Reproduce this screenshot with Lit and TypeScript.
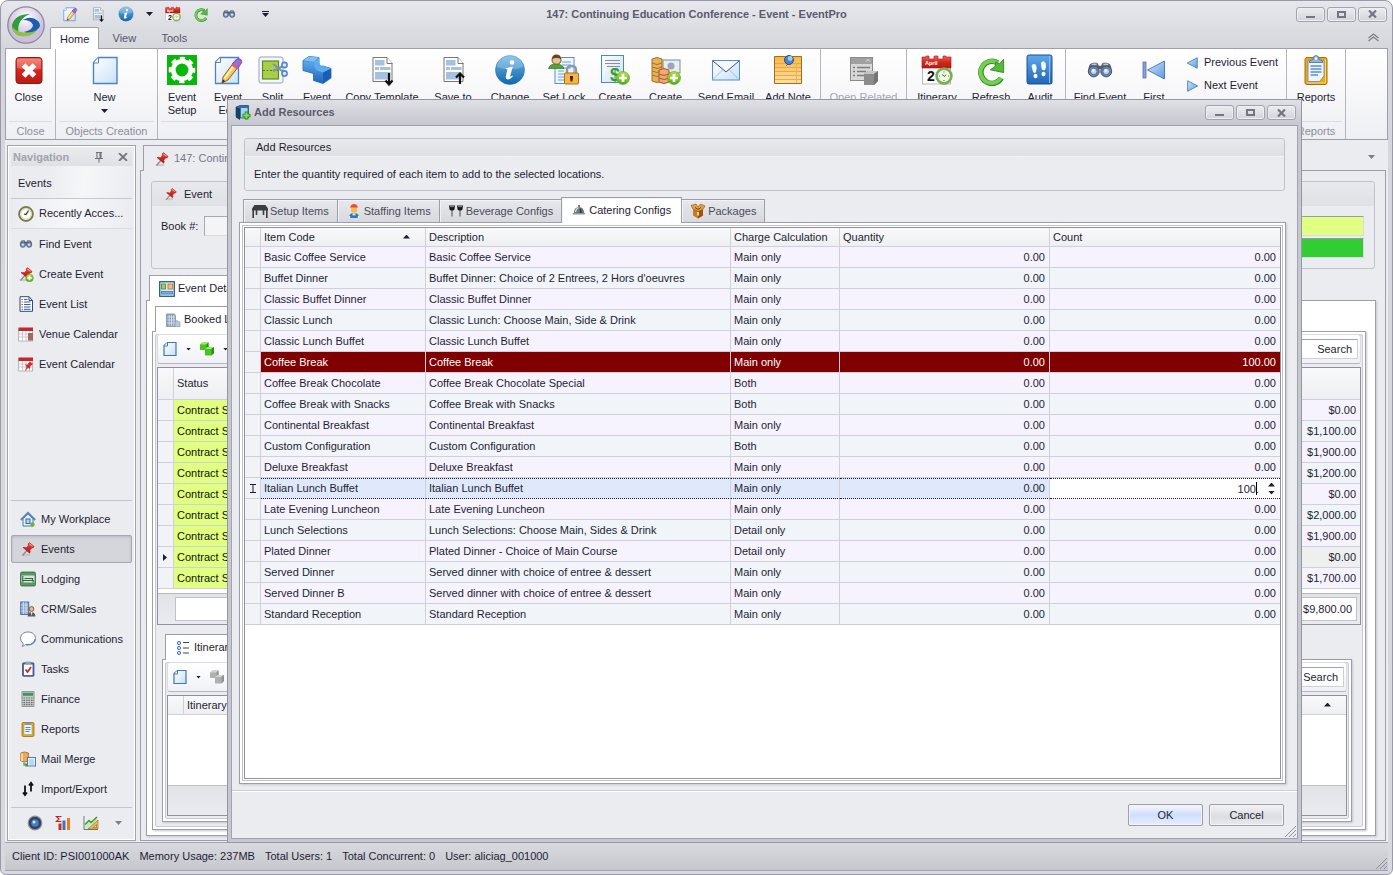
import { LitElement, html, svg, css, nothing, TemplateResult, SVGTemplateResult } from "lit";
import { customElement, state } from "lit/decorators.js";
import { classMap } from "lit/directives/class-map.js";
import { styleMap } from "lit/directives/style-map.js";

const plusBadge = (x: number, y: number, r: number) => svg`
  <circle cx=${x} cy=${y} r=${r} fill="url(#g-lime)" stroke="#5a9a1c" stroke-width="0.6" />
  <path d=${`M${x - r * 0.6} ${y}H${x + r * 0.6}M${x} ${y - r * 0.6}V${y + r * 0.6}`} stroke="#fff" stroke-width=${r * 0.42} />`;

const pencil = svg`
  <path d="M11 23 L22 8 L27 12 L16 26 L10 29 Z" fill="#f3c65a" stroke="#8a6420" stroke-width="1" />
  <path d="M12.500 24.500 L23.500 9.500" stroke="#fdf0bd" stroke-width="2" />
  <path d="M20.500 10 L23 6.500 Q26 3 29 5.500 Q31 8 28.500 10.500 L26 14 Z" fill="#9a6fd0" stroke="#6b3f96" stroke-width="0.8" />
  <path d="M19.500 11.500 L25 15.500 L26.500 13.500 L21 9.500 Z" fill="#e5568c" />
  <path d="M10 29 L11 25.500 L13.300 27.300 Z" fill="#333" />`;

const pinShape = svg`
  <ellipse cx="6" cy="14" rx="4.500" ry="1.200" fill="#bcbcc4" opacity=".7" />
  <path d="M2.500 14.500 L6.800 9.500" stroke="#8c8c94" stroke-width="1.300" />
  <path d="M3 6.500 Q5 6 6.200 7 L8.300 4.700 Q7.600 2.600 9.400 1.600 L14 5.400 Q13.500 7.300 11.500 7 L9.700 9.300 Q10.800 11 9.700 12.200 Z" fill="url(#g-red)" stroke="#a5141a" stroke-width=".6" />
  <path d="M9.500 2.800 L12.500 5.300" stroke="#ff9a90" stroke-width="1.100" />`;

const binoculars = svg`<g transform="translate(2.700 2.500) scale(.83)">
  <path d="M2 15 Q3 7.500 8 7.500 H12 Q14 8 14.500 11 H17.500 Q18 8 20 7.500 H24 Q29 7.500 30 15 V20 H17 V15 H15 V20 H2 Z" fill="#55606e" />
  <path d="M6 9.500 H12 M20 9.500 H26" stroke="#bcc8d6" stroke-width="2" />
  <circle cx="8.500" cy="18" r="6.500" fill="#7186a4" stroke="#46536a" stroke-width="1.200" />
  <circle cx="23.500" cy="18" r="6.500" fill="#7186a4" stroke="#46536a" stroke-width="1.200" />
  <circle cx="8.500" cy="18" r="4" fill="#b7d2f2" stroke="#3e62a0" />
  <circle cx="23.500" cy="18" r="4" fill="#b7d2f2" stroke="#3e62a0" />
  <circle cx="8" cy="17" r="1.500" fill="#fff" /><circle cx="23" cy="17" r="1.500" fill="#fff" /></g>`;

const clipboard = svg`
  <rect x="5" y="3.500" width="22" height="27" rx="2" fill="#eaa90e" stroke="#a56c08" />
  <path d="M24.500 6 H25.500 V29 H7" stroke="#ffd867" fill="none" />
  <path d="M8 6.500 H24 V22 L19.500 27.500 H8 Z" fill="#eef5fd" stroke="#7d94b8" />
  <path d="M10.500 12 H21.500 M10.500 15 H21.500 M10.500 18 H21.500 M10.500 21 H18" stroke="#5d8fd4" stroke-width="1.300" />
  <path d="M9 8.500 Q9 6 13 5.500 Q13 1.500 16 1.500 T19 5.500 Q23 6 23 8.500 Z" fill="#8fb4e4" stroke="#4f6a94" stroke-width=".8" />
  <circle cx="16" cy="4.500" r="1.200" fill="#fff" />`;

const template = svg`
  <path d="M7 3.500 H21 L26 9 V27.500 H7 Z" fill="#fff" stroke="#777" />
  <path d="M21 3.500 V9.500 H26.500" fill="#fff" stroke="#777" />
  <path d="M9 6 H18.500 V11.500 H9 Z M9 13 H13 V16 H9 Z M14 13 H24.500 V16 H14 Z M9 18 H24.500 V25.500 H9 Z" fill="#a5c0e0" />`;

const calendarPage = svg`
  <rect x="1.500" y="10" width="28" height="20" fill="#fdfdfd" stroke="#b8b8c0" />
  <path d="M1 3 H5 V2 H8 V5 H13 V2 H17 V5 H22 V2 H25 V3 H30 V14 H1 Z" fill="url(#g-red)" stroke="#9a1218" stroke-width=".6" />`;

const blankDoc = svg`
  <path d="M4.500 8.500 L9.500 3.500 H28 V29.500 H4.500 Z" fill="url(#g-page)" stroke="#4c83c3" stroke-width="1.400" />
  <path d="M4.500 9 H9.500 V3.500" fill="#fff" stroke="#4c83c3" stroke-width="1" />`;

const cubePair = (top: string, left: string, right: string) => svg`
  <path d="M1 3.500 L3.500 1.500 H9.500 V7 L7.500 9 H1 Z" fill=${left} /><path d="M1 3.500 L3.500 1.500 H9.500 L7.500 3.500 Z" fill=${top} /><path d="M7.500 3.500 L9.500 1.500 V7 L7.500 9 Z" fill=${right} />
  <path d="M6 8 L8.500 6 H15 V12 L12.500 14.500 H6 Z" fill=${left} /><path d="M6 8 L8.500 6 H15 L12.500 8 Z" fill=${top} /><path d="M12.500 8 L15 6 V12 L12.500 14.500 Z" fill=${right} />`;

const ICONS: Record<string, { box: number; art: SVGTemplateResult }> = {
  close: { box: 32, art: svg`
    <rect x="3" y="3.500" width="26" height="26" rx="3" fill="url(#g-red)" stroke="#8e1712" />
    <path d="M4 5 H28 V15 Q16 17 4 14 Z" fill="#fff" opacity=".22" />
    <path d="M10.500 11 L21.500 22 M21.500 11 L10.500 22" stroke="#fff" stroke-width="5.200" />` },
  blank: { box: 32, art: blankDoc },
  gear: { box: 32, art: svg`
    <rect x="1" y="1" width="30" height="30" fill="#08b808" />
    <circle cx="16" cy="16" r="8.700" fill="none" stroke="#fff" stroke-width="4.600" />
    <circle cx="16" cy="16" r="11.600" fill="none" stroke="#fff" stroke-width="3.400" stroke-dasharray="5.100 4.010" stroke-dashoffset="2.500" />` },
  edit: { box: 32, art: svg`
    <path d="M3.500 8 L8 3.500 H26.500 V29.500 H3.500 Z" fill="url(#g-page)" stroke="#4c83c3" stroke-width="1.300" />
    <path d="M3.500 8.500 H8.500 V3.500" fill="#fff" stroke="#4c83c3" />${pencil}` },
  split: { box: 32, art: svg`
    <rect x="2" y="3" width="24" height="26" rx="2" fill="#f5f8fc" stroke="#8fa2c4" />
    <rect x="5.500" y="7" width="16" height="18" fill="#a7cf4a" stroke="#5f8c1e" stroke-width="1.200" />
    <path d="M6 16.500 H21" stroke="#5b7c22" stroke-dasharray="2 1.500" />
    <path d="M16 10 L27 18.500 M16 17 L27 11.500" stroke="#7e90ab" stroke-width="2" />
    <circle cx="27.500" cy="11" r="2.600" fill="#dce9fa" stroke="#4d86cf" stroke-width="1.600" />
    <circle cx="27.500" cy="19.500" r="2.600" fill="#dce9fa" stroke="#4d86cf" stroke-width="1.600" />` },
  puzzle: { box: 32, art: svg`
    <path d="M2 6.500 L8 2.500 L18 3.500 V9 Q18 13 22 12 L30 14.500 V24 L22 29.500 L12.500 26.500 V19.500 L2 16.500 Z" fill="#2a7fd0" stroke="#1d5fae" stroke-width=".8" />
    <path d="M2 6.500 L8 2.500 L18 3.500 L12.500 8 Z" fill="#7fc0f4" />
    <path d="M2.400 7 L12.500 8.500 Q12 14 16.500 16.500 L21.500 18.500 V29 L13 26.200 V19 L2.400 16.200 Z" fill="url(#g-cube)" />
    <path d="M12.500 8 L18 4 V9 Q18 13 22 12 L30 14.500 L22 18.500 Q12 17 12.500 8 Z" fill="#5aaeee" />
    <path d="M22 18.700 L29.700 14.800 V23.800 L22 29 Z" fill="#1b5fb4" />` },
  copyTemplate: { box: 32, art: svg`${template}<path d="M23 19 V30 M19.500 26.500 L23 30.500 L26.500 26.500" fill="none" stroke="#111" stroke-width="2.200" />` },
  saveTemplate: { box: 32, art: svg`${template}<path d="M23 30 V20 M19 23.500 L23 19.500 L27 23.500" fill="none" stroke="#111" stroke-width="2.200" />` },
  info: { box: 32, art: svg`
    <circle cx="16" cy="16" r="14.500" fill="url(#g-info)" stroke="#2a78b8" stroke-width=".6" />
    <path d="M3 13 A13 12 0 0 1 29 13 Q16 18 3 13 Z" fill="#fff" opacity=".22" />
    <circle cx="18" cy="8.500" r="2.300" fill="#fff" />
    <path d="M12 14 Q16 13.500 18.800 12.500 L16.200 22 Q15.900 23.500 18.500 21.500 L18.800 22.500 Q15 26.500 12.600 25 Q11.400 24 12 21.500 L13.500 15.300 L12 15 Z" fill="#fff" />` },
  lock: { box: 32, art: svg`
    <rect x="7" y="3.500" width="19" height="26" fill="#eff6fe" stroke="#5b8ccb" />
    <path d="M14 8 H23 M14 11 H23 M14 14 H23 M10 17 H16 M10 20 H16 M10 23 H16 M10 26 H16" stroke="#6f9ed6" stroke-width="1.200" />
    <circle cx="8.500" cy="6" r="4.500" fill="#e8c39a" stroke="#744f22" /><path d="M4 5 Q4 .5 8.500 .5 T13 5 Q9 3 4 5 Z" fill="#6b451c" />
    <path d="M.5 14.500 Q2 9.500 8.500 10 T16 14.500 Z" fill="#4fa635" stroke="#2e7420" stroke-width=".7" />
    <path d="M19 19 V16 Q19 12 23.500 12 T28 16 V19" fill="none" stroke="#8d99ab" stroke-width="2.400" />
    <rect x="16.500" y="19" width="14" height="11" rx="1" fill="#f6b646" stroke="#b06c14" />
    <path d="M22 22 H25 V24 L24.300 27.500 H22.700 L22 24 Z" fill="#3c2508" />` },
  money: { box: 32, art: svg`
    <rect x="2.500" y="1.500" width="22" height="27" fill="url(#g-page)" stroke="#4e87c8" />
    <path d="M6 6.500 H21 M6 9.500 H21 M8 12.500 H21" stroke="#8b9098" stroke-width="1.100" />
    <text x="11" y="27" font-size="18" font-weight="700" fill="#3b9a33" font-family="Liberation Sans">$</text>
    ${plusBadge(24, 24, 6.500)}` },
  coins: { box: 32, art: svg`
    <rect x="13" y="6" width="17" height="13" fill="#e7edf3" stroke="#7d8a98" /><circle cx="21" cy="12" r="3.500" fill="#9aa7b4" />
    <path d="M2 5 Q7 2 12 5 V27 Q7 30 2 27 Z" fill="#e8b25c" stroke="#a86f22" />
    <path d="M2 9 Q7 12 12 9 M2 13 Q7 16 12 13 M2 17 Q7 20 12 17 M2 21 Q7 24 12 21" fill="none" stroke="#a86f22" />
    <path d="M9 16 Q14 13 19 16 V28 Q14 31 9 28 Z" fill="#f0a878" stroke="#a8562a" />
    <path d="M9 20 Q14 23 19 20 M9 24 Q14 27 19 24" fill="none" stroke="#a8562a" />${plusBadge(24, 24, 6.500)}` },
  mail: { box: 32, art: svg`
    <rect x="2.500" y="6.500" width="27" height="19.500" fill="url(#g-page)" stroke="#5b8ccb" />
    <path d="M3 25.500 L12.500 16 M29 25.500 L19.500 16" stroke="#9dbfe6" /><path d="M3 7 L16 18 L29 7" fill="#f4f9fe" stroke="#35507c" />` },
  note: { box: 32, art: svg`
    <path d="M2.500 2.500 H29.500 V29.500 H2.500 Z" fill="url(#g-note)" stroke="#a8691a" />
    <path d="M3 9.500 H29 M3 13.500 H29 M3 17.500 H29 M3 21.500 H29 M3 25.500 H29" stroke="#e0a040" stroke-width=".8" /><path d="M24.500 9 V29" stroke="#e8b25c" />
    <path d="M17 9 L14 12" stroke="#777" />
    <circle cx="17" cy="6" r="4.500" fill="#4a84c8" stroke="#234f8a" /><circle cx="18.200" cy="4.500" r="2.400" fill="#a6cbf2" />` },
  related: { box: 32, art: svg`
    <rect x="2.500" y="3.500" width="22" height="23" fill="#d8d8d8" stroke="#8a8a8a" /><rect x="3" y="4" width="21" height="6" fill="#a0a0a0" />
    <path d="M18 7.500 L20 5.500 L22 7.500" stroke="#eee" fill="none" />
    <path d="M5 13.500 H7 M9 13.500 H22 M5 17.500 H7 M9 17.500 H18 M5 21.500 H7 M9 21.500 H16" stroke="#7c7c7c" stroke-width="1.400" />
    <path d="M16 20 L20 17 H30 V27 L26 31 H16 Z" fill="#8c8c8c" /><path d="M16 20 L20 17 H30 L26 20 Z" fill="#c4c4c4" /><path d="M26 20 L30 17 V27 L26 31 Z" fill="#747474" />` },
  itinerary: { box: 32, art: svg`${calendarPage}
    <text x="4" y="11" font-size="5.500" font-weight="700" fill="#fff" font-family="Liberation Sans">April</text>
    <text x="6" y="27" font-size="14" font-weight="700" fill="#111" font-family="Liberation Sans">2</text>
    <circle cx="23" cy="22" r="7.400" fill="#f1fbe8" stroke="#78b053" stroke-width="2.600" /><path d="M23 17.500 V18.500 M23 26 V27 M18 22 H19 M27 22 H28 M21 20.500 L23.500 22.500 L25 20.500" stroke="#4a6a38" fill="none" />` },
  refresh: { box: 32, art: svg`<g transform="translate(1.500 2) scale(.92)">
    <path d="M27 24 A12 12 0 1 1 23 7.500" fill="none" stroke="#2f8a22" stroke-width="6" />
    <path d="M26.500 24 A12 12 0 1 1 23 7.500" fill="none" stroke="#74cf50" stroke-width="4.200" />
    <path d="M29.500 3.500 V18 L15 15 L20 11.500 L21 6.500 L25 8.500 Z" fill="#58b83a" stroke="#2f8a22" /></g>` },
  audit: { box: 32, art: svg`
    <rect x="3" y="1" width="25" height="29" rx="2" fill="url(#g-cube)" stroke="#1d4f94" /><path d="M25.500 2 V29" stroke="#8ebbea" />
    <g fill="#fff"><path d="M7.500 12 Q9 8.500 12 11 Q13.500 14 12 18 Q10 20 9 17.500 Z" /><ellipse cx="11.500" cy="22" rx="2" ry="2.300" />
    <path d="M17 9 Q19 5.500 21.500 9 Q22.500 13 21 16 Q18 17 17.500 14 Z" /><ellipse cx="19.500" cy="20" rx="2" ry="2.300" /></g>` },
  binoculars: { box: 32, art: binoculars },
  first: { box: 32, art: svg`<rect x="5" y="8" width="3" height="16" fill="#8c9fd4" stroke="#5470b4" stroke-width=".8" /><path d="M26.500 7 V25 L9.500 16 Z" fill="url(#g-tri)" stroke="#4a7fbe" />` },
  previous: { box: 16, art: svg`<path d="M14 2 V14 L2.500 8 Z" fill="url(#g-tri)" stroke="#4a7fbe" />` },
  next: { box: 16, art: svg`<path d="M3 2 V14 L14.500 8 Z" fill="url(#g-tri)" stroke="#4a7fbe" />` },
  clipboard: { box: 32, art: clipboard },
  pin: { box: 16, art: pinShape },
  pinAdd: { box: 16, art: svg`${pinShape}${plusBadge(11.500, 12, 3.800)}` },
  clock: { box: 16, art: svg`
    <circle cx="8" cy="8" r="6.900" fill="#fbfcf2" stroke="#7b7d52" stroke-width="2" /><circle cx="8" cy="8" r="5.300" fill="none" stroke="#d5d8b0" />
    <path d="M10.500 4.500 L8 8.500 L6 8" fill="none" stroke="#333" stroke-width="1.200" />` },
  list: { box: 16, art: svg`
    <path d="M2 .7 H11 L14.500 4.500 V15.300 H2 Z" fill="#fff" stroke="#274d78" /><path d="M11 .7 V4.500 H14.500" fill="none" stroke="#274d78" />
    <path d="M3.500 3.500 H4.800 M3.500 6 H4.800 M3.500 8.500 H4.800 M3.500 11 H4.800 M3.500 13.300 H4.800" stroke="#c03030" /><path d="M6 3.500 H9.500 M6 6 H12.500 M6 8.500 H12.500 M6 11 H12.500 M6 13.300 H12.500" stroke="#2d62a8" />` },
  venueCalendar: { box: 16, art: svg`
    <rect x=".7" y="3" width="14" height="12" fill="#fff" stroke="#9a9aa2" stroke-width=".7" /><path d="M.5 1.500 H15 V5 H.5 Z" fill="#c9252b" />
    <path d="M1 8 H14 M1 11 H14 M4.500 5 V15 M8 5 V15 M11.500 5 V15" stroke="#b9b9c0" stroke-width=".7" /><path d="M10 7 H15 V14.500 H10 Z" fill="#a9675c" />` },
  eventCalendar: { box: 16, art: svg`
    <rect x=".7" y="3" width="14" height="12" fill="#fff" stroke="#9a9aa2" stroke-width=".7" /><path d="M.5 1.500 H15 V5 H.5 Z" fill="#c9252b" />
    <path d="M1 8 H14 M1 11 H14 M4.500 5 V15 M8 5 V15 M11.500 5 V15" stroke="#b9b9c0" stroke-width=".7" />
    <path d="M7 8 L9 9 L12 5.500 L15 8 L12 10.500 L12 13 L10 12 L7 15 L8.500 11 Z" fill="#dc2a2c" />` },
  home: { box: 16, art: svg`
    <path d="M3 8 V15 H13 V8 L8 3 Z" fill="#e8f1fb" stroke="#4a76ae" /><path d="M.8 9 L8 2 L15.200 9" fill="none" stroke="#5c86ba" stroke-width="2" />
    <rect x="6" y="8" width="4" height="4.500" fill="#b8d4f2" stroke="#3769ab" /><circle cx="12.500" cy="13.500" r="2.200" fill="#6cb33c" />` },
  lodging: { box: 16, art: svg`
    <rect x=".5" y="1" width="15" height="14" rx="1.500" fill="#5d9468" stroke="#2f6a3c" stroke-width=".8" /><rect x="1.500" y="4.500" width="13" height="7" fill="#d4e7d6" />
    <path d="M2.800 5 V11.500 M2.800 9.500 H13.200 V11.500 M4.500 7.500 H12.500 V9.500" stroke="#2f6a3c" fill="none" stroke-width="1.100" />` },
  crm: { box: 16, art: svg`
    <rect x=".7" y="1" width="8" height="12.500" fill="#8fabd4" stroke="#4f6fa6" /><path d="M1 4 H8 M1 7 H8 M1 10 H8 M3.500 1 V13 M6 1 V13" stroke="#dbe6f6" stroke-width=".7" />
    <circle cx="11.500" cy="8" r="2.400" fill="#eab986" stroke="#6b3f1c" stroke-width=".8" /><path d="M7.500 15.500 Q8 11 11.500 11 T15.500 15.500 Z" fill="#5a5a60" /><path d="M11 11 L11.500 15 L12.500 11 Z" fill="#fff" />` },
  bubble: { box: 16, art: svg`<path d="M8 1 C12.500 1 15.500 3.700 15.500 7.500 S12.500 14 8 14 Q6.500 14 5.500 13.500 Q4.500 15 2 15.300 Q3.500 14 3 12.200 Q.5 10.500 .5 7.500 C.5 3.700 3.500 1 8 1 Z" fill="#fff" stroke="#7a8594" /><path d="M6 13.700 Q14 14 15.200 8" fill="none" stroke="#3f83c2" stroke-width="1.200" />` },
  tasks: { box: 16, art: svg`
    <rect x="2.500" y="1.800" width="11.500" height="13.500" rx="1" fill="#4a6fae" stroke="#2c4878" stroke-width=".7" /><rect x="4" y="3.500" width="8.500" height="10.500" fill="#fff" />
    <rect x="5.500" y=".6" width="5.500" height="2.800" fill="#9aa0aa" /><path d="M5.500 8.500 L7.500 11 L11 6" fill="none" stroke="#cc2222" stroke-width="1.700" />` },
  finance: { box: 16, art: svg`
    <rect x="2" y=".7" width="12" height="14.600" fill="#c8ccc8" stroke="#6f7470" stroke-width=".7" /><rect x="3" y="1.800" width="10" height="3" fill="#3f9460" />
    <path d="M3.500 7 H12.500 M3.500 9.300 H12.500 M3.500 11.600 H12.500 M3.500 13.700 H12.500" stroke="#6a6d6a" stroke-dasharray="1.500 1" stroke-width="1.200" />` },
  reportsSmall: { box: 16, art: svg`
    <rect x="2" y="1.500" width="12" height="14" rx="1.200" fill="#eaa90e" stroke="#a56c08" stroke-width=".8" />
    <rect x="4" y="3.500" width="8" height="10" fill="#f3f8fe" stroke="#8296b8" stroke-width=".6" /><path d="M5.500 6.500 H10.500 M5.500 8.500 H10.500 M5.500 10.500 H9.500" stroke="#4f86cc" />
    <path d="M5 4 V2.500 H6.500 Q8 -.3 9.500 2.500 H11 V4 Z" fill="#6f94c8" />` },
  mailMerge: { box: 16, art: svg`
    <path d="M.8 2 Q4.500 0 8.500 2 V10 Q4.500 12 .8 10 Z" fill="#e9a95a" stroke="#a86a20" stroke-width=".8" /><path d="M2 2.500 V10" stroke="#ffe3b4" stroke-width="1.500" />
    <rect x="7.500" y="6.500" width="8" height="8.500" fill="#eef5fd" stroke="#4878b6" /><path d="M9 9 H14 M9 11 H14 M9 13 H14" stroke="#7aa4d8" stroke-width=".8" />
    <path d="M4 11.500 V14 H7 M5.500 12.500 L7.200 14 L5.500 15.500" fill="none" stroke="#3b9a2b" stroke-width="1.200" />` },
  importExport: { box: 16, art: svg`<path d="M5 4.500 V14 M3 11.500 L5 14 L7 11.500 M11 10.500 V2 M9 4.500 L11 1.800 L13 4.500" fill="none" stroke="#111" stroke-width="1.800" />` },
  orb: { box: 16, art: svg`<circle cx="8" cy="8" r="6.800" fill="#3a4252" stroke="#8a94a6" stroke-width="1.200" /><circle cx="8" cy="8" r="3.800" fill="#3f7fd2" /><circle cx="7" cy="7" r="1.500" fill="#d5e8fc" />` },
  sigmaChart: { box: 16, art: svg`<path d="M6.500 1.500 H1.500 L4 4 L1.500 6.500 H6.500" fill="none" stroke="#c02222" stroke-width="1.200" /><path d="M3.500 8.500 H6.500 V15 H3.500 Z" fill="#d22c1e" /><path d="M7.500 5.500 H10.500 V15 H7.500 Z" fill="#3c74c0" /><path d="M12 3 H15 V15 H12 Z" fill="#ee7a1c" />` },
  areaChart: { box: 16, art: svg`<path d="M1 1 V14.500 H15" fill="none" stroke="#6a7a8c" /><path d="M2 9 L6 5 L8 7 L14 2 V13.500 H2 Z" fill="#cfe8b8" /><path d="M2 9.500 L6 5.500 L8 7.500 L14 2" fill="none" stroke="#3f9a2c" stroke-width="1.500" /><path d="M5 14 L15 5 V14 Z M10 12.500 H13.500 V9.500 Z" fill="#f0b860" fill-rule="evenodd" stroke="#9a6418" stroke-width=".6" />` },
  layout: { box: 16, art: svg`<rect x=".7" y=".7" width="14.600" height="14.600" fill="#d8e8f8" stroke="#1f4f8c" stroke-width="1.200" /><rect x="2.500" y="3" width="4" height="5" fill="#9ad06c" stroke="#4a8a28" stroke-width=".8" /><rect x="9" y="3" width="4.500" height="5" fill="#f2bf74" stroke="#b57620" stroke-width=".8" /><rect x="2.500" y="10.500" width="11" height="2.500" fill="#7fb0e0" stroke="#3f74b0" stroke-width=".8" />` },
  building: { box: 16, art: svg`<path d="M1.500 2 H9.500 L10.500 4 V14.500 H1.500 Z" fill="#7c9cc8" stroke="#a0a088" /><path d="M2 5 H10 M2 8 H10 M2 11 H10 M4.200 3 V14 M6.500 3 V14 M8.800 3 V14" stroke="#dfeaf8" stroke-width=".8" /><path d="M10 10 L12 8.500 L15 10.500 V14.500 H10 Z" fill="#b8c8e0" stroke="#a0a088" stroke-width=".8" />` },
  smallDoc: { box: 16, art: svg`<path d="M2 4.500 L5.500 1.500 H14 V14.500 H2 Z" fill="url(#g-page)" stroke="#3c78bc" stroke-width="1.200" /><path d="M2 5 H5.500 V1.500" fill="#fff" stroke="#3c78bc" />` },
  greenCubes: { box: 16, art: cubePair("#9be86a", "#4cc324", "#2d8f12") },
  grayCubes: { box: 16, art: cubePair("#d2d2d4", "#b0b0b2", "#929294") },
  bullets: { box: 16, art: svg`<g fill="#d7e8f8" stroke="#3c74b4"><circle cx="4" cy="3" r="1.600" /><circle cx="4" cy="8" r="1.600" /><circle cx="4" cy="13" r="1.600" /></g><path d="M8 2.500 H14 M8 8 H14 M8 13 H14" stroke="#444" stroke-width="1.200" />` },
  tableIcon: { box: 16, art: svg`<path d="M0 5.500 L2.500 2 H13.500 L16 5.500 V7.500 H0 Z" fill="#3c3c40" /><path d="M1.200 7 V15 M4.500 7 V12 M11.500 7 V12 M14.800 7 V15" stroke="#3c3c40" stroke-width="1.600" />` },
  person: { box: 16, art: svg`<path d="M4.500 5 V3.500 Q5 1 8 1 T11.500 3.500 V5 Z" fill="#e8502e" /><path d="M5 4.500 H11 V8 Q10.500 10 8 10 T5 8 Z" fill="#f5b95e" /><path d="M3.500 15 V12 L6 10 H10 L12.500 12 V15 Z" fill="#1e7cc8" /><path d="M6.500 9.500 H9.500 V12.500 H6.500 Z" fill="#f7d08e" /><path d="M3 13 H4.200 V15 H3 Z M11.800 13 H13 V15 H11.800 Z" fill="#e8f2fb" />` },
  glasses: { box: 16, art: svg`<path d="M1 2.500 H7 L6.500 6.500 Q4 9 1.500 6.500 Z M9 2.500 H15 L14.500 6.500 Q12 9 9.500 6.500 Z" fill="#18181c" /><path d="M4 7 V13.500 M12 7 V13.500" stroke="#555" stroke-width="1.100" /><path d="M1.800 3.600 H6 M9.800 3.600 H14" stroke="#8a8a90" />` },
  cloche: { box: 16, art: svg`<circle cx="8" cy="3.500" r="1.200" fill="#555" /><path d="M2 11.500 Q2.500 4.500 8 4.500 T14 11.500 Z" fill="#6f7680" /><path d="M4 10.500 Q4.500 6.500 7.500 5.500" stroke="#e4e8ee" fill="none" stroke-width="1.200" /><path d="M8.500 5.500 Q9.500 8 9 11 H11.500 Q11 7 8.500 5.500 Z" fill="#34383e" /><rect x=".8" y="11.500" width="14.400" height="1.600" rx=".8" fill="#8e959e" />` },
  box: { box: 16, art: svg`<path d="M3 6 L8 8 L13 6 V12.500 L8 15.500 L3 12.500 Z" fill="#c77a24" /><path d="M8 8 L13 6 V12.500 L8 15.500 Z" fill="#9a5614" /><path d="M3 6 L1 2.500 L6 1 L8 4 L10.500 1 L15 3 L13 6.500 L8 8.500 Z" fill="#e2a04a" stroke="#8c4e14" stroke-width=".6" /><path d="M5 4.500 L8 6.500 L11 4.500" fill="none" stroke="#70400f" /><path d="M7 9 H9 V12 L8 13 L7 12 Z" fill="#f4cf90" />` },
  bookAdd: { box: 16, art: svg`<path d="M1 2 L5 .5 H13.500 V13 H5 L1 11.500 Z" fill="#2f6fae" stroke="#174878" stroke-width=".7" /><path d="M1 2 L5 3.500 V15 L1 12.500 Z" fill="#153f68" /><path d="M6 3 H12.500 V12.500 H6 Z" fill="#a8d2f0" /><path d="M11.500 6.500 V14.500 M7.500 10.500 H15.500" stroke="#2e8a1c" stroke-width="3.600" /><path d="M11.500 7.500 V13.500 M8.500 10.500 H14.500" stroke="#7ee05a" stroke-width="1.800" />` },
  pushpin: { box: 12, art: svg`<path d="M3 1.500 H9 M4 1.500 V7 M2 7.500 H10 M6 8 V11.500" stroke="#70707c" stroke-width="1.100" fill="none" /><path d="M6.500 2 H8.500 V7 H6.500 Z" fill="#70707c" />` },
};

const icon = (name: string, size: number) => {
  const { box, art } = ICONS[name];
  return html`<svg class="icon" width=${size} height=${size} viewBox="0 0 ${box} ${box}" aria-hidden="true">${art}</svg>`;
};

interface Tool { label: string; icon: string; width: number; disabled?: boolean; menu?: boolean }

const EVENT_TOOLS: Tool[] = [
  { label: "Event Setup", icon: "gear", width: 46 },
  { label: "Event Edit", icon: "edit", width: 46 },
  { label: "Split Event", icon: "split", width: 43 },
  { label: "Event Merge", icon: "puzzle", width: 46 },
  { label: "Copy Template", icon: "copyTemplate", width: 84 },
  { label: "Save to Template", icon: "saveTemplate", width: 58 },
  { label: "Change Status", icon: "info", width: 56 },
  { label: "Set Lock", icon: "lock", width: 52 },
  { label: "Create Invoice", icon: "money", width: 50 },
  { label: "Create Deposit", icon: "coins", width: 51 },
  { label: "Send Email", icon: "mail", width: 70 },
  { label: "Add Note", icon: "note", width: 54 },
];

const NAV_ITEMS = [
  ["clock", "Recently Acces..."], ["binoculars", "Find Event"], ["pinAdd", "Create Event"],
  ["list", "Event List"], ["venueCalendar", "Venue Calendar"], ["eventCalendar", "Event Calendar"],
];

const NAV_GROUPS = [
  ["home", "My Workplace"], ["pin", "Events"], ["lodging", "Lodging"], ["crm", "CRM/Sales"],
  ["bubble", "Communications"], ["tasks", "Tasks"], ["finance", "Finance"], ["reportsSmall", "Reports"],
  ["mailMerge", "Mail Merge"], ["importExport", "Import/Export"],
];

const AMOUNTS = ["$0.00", "$1,100.00", "$1,900.00", "$1,200.00", "$0.00", "$2,000.00", "$1,900.00", "$0.00", "$1,700.00"];

interface Config { code: string; text: string; charge: string; count: string }
const row = (code: string, text = code, charge = "Main only", count = "0.00"): Config => ({ code, text, charge, count });

const CONFIGS: Config[] = [
  row("Basic Coffee Service"),
  row("Buffet Dinner", "Buffet Dinner: Choice of 2 Entrees, 2 Hors d'oeuvres"),
  row("Classic Buffet Dinner"),
  row("Classic Lunch", "Classic Lunch: Choose Main, Side & Drink"),
  row("Classic Lunch Buffet"),
  row("Coffee Break", "Coffee Break", "Main only", "100.00"),
  row("Coffee Break Chocolate", "Coffee Break Chocolate Special", "Both"),
  row("Coffee Break with Snacks", "Coffee Break with Snacks", "Both"),
  row("Continental Breakfast"),
  row("Custom Configuration", "Custom Configuration", "Both"),
  row("Deluxe Breakfast"),
  row("Italian Lunch Buffet", "Italian Lunch Buffet", "Main only", "100."),
  row("Late Evening Luncheon"),
  row("Lunch Selections", "Lunch Selections: Choose Main, Sides & Drink", "Detail only"),
  row("Plated Dinner", "Plated Dinner - Choice of Main Course", "Detail only"),
  row("Served Dinner", "Served dinner with choice of entree & dessert"),
  row("Served Dinner B", "Served dinner with choice of entree & dessert"),
  row("Standard Reception"),
];

@customElement("app-root")
export class AppRoot extends LitElement {
  @state() private highlighted = 5;
  @state() private editing = 11;

  static styles = css`
    :host { display: block; font: 11px/13px "Liberation Sans", Arial, sans-serif; color: #1e1e32; cursor: default; }
    * { box-sizing: border-box; }
    button, input { font: inherit; color: inherit; margin: 0; padding: 0; border: 0; background: none; outline: none; }
    a { color: inherit; text-decoration: none; }
    .defs { position: absolute; }
    .icon { display: block; flex: none; }
    .gap { width: 4px; flex: none; }
    .arrow { width: 5px; height: 3px; background: currentColor; clip-path: polygon(0 0, 100% 0, 50% 100%); flex: none; }
    .arrow.large { width: 7px; height: 4px; }
    .arrow.up { clip-path: polygon(0 100%, 100% 100%, 50% 0); }
    .arrow.muted { color: #7d7d8c; }

    .window { position: relative; display: flex; flex-direction: column; height: 100vh; min-height: 640px; overflow: hidden;
      border: 1px solid #9a99a8; border-radius: 8px 8px 6px 6px;
      background: linear-gradient(#e6e7ec, #d5d6db 48px, #d8d9de); }
    .title-row { display: grid; grid-template-columns: 1fr auto 1fr; align-items: center; height: 26px; }
    .title { margin: 0; font-size: 11px; font-weight: 700; color: #5a5a6c; }
    .quick { display: flex; align-items: center; gap: 12px; padding-left: 61px; }
    .quick button { display: flex; }
    .quick .lead { margin-right: 2px; }
    .app-orb { position: absolute; left: 6px; top: 5px; width: 38px; height: 38px; }
    .frame-buttons { display: flex; justify-content: flex-end; gap: 2px; padding-right: 5px; }
    .frame-buttons button { display: flex; align-items: center; justify-content: center; width: 29px; height: 15px; color: #747484;
      border: 1px solid #a3a3b0; border-radius: 3px; background: linear-gradient(#ececf0, #d3d4da); box-shadow: inset 0 0 0 1px #eeeef2; }
    .tab-row { display: flex; align-items: flex-end; height: 21px; padding-left: 49px; }
    .ribbon-tab { height: 20px; padding: 0 9px; min-width: 50px; color: #55556a; text-align: center; }
    .ribbon-tab.active { height: 22px; min-width: 49px; padding-top: 1px; color: #1e1e32; border: 1px solid #9e9eac; border-bottom: 0; border-radius: 2px 2px 0 0; background: #fff; z-index: 1; margin-bottom: -1px; }
    .collapse { margin: 0 12px 6px auto; display: flex; }

    .ribbon { display: flex; height: 92px; margin: 0 4px; border: 1px solid #9e9eac; background: linear-gradient(#fff, #f8f8fa 40px, #eeeff3); flex: none; }
    .group { display: flex; flex-direction: column; border-right: 1px solid #b4b5c0; padding: 5px 1px 0; }
    .group .tools { display: flex; flex: 1; }
    .group .caption { height: 18px; padding-top: 3px; text-align: center; color: #8d8d9c; border-top: 1px solid #dcdde3; margin: 0 2px; white-space: nowrap; }
    .tool { display: flex; flex-direction: column; align-items: center; gap: 5px; flex: none; }
    .tool:disabled { color: #a4a4b2; }
    .small-tools { display: flex; flex-direction: column; padding: 0 7px 0 10px; }
    .small-tools button { display: flex; align-items: center; gap: 5px; height: 23px; margin-top: -3px; margin-bottom: 3px; white-space: nowrap; }

    .body { position: relative; z-index: 0; display: flex; gap: 4px; flex: 1; min-height: 0; margin: 0 4px; padding: 5px 2px 1px; background: #ebecf0; }
    .nav { display: flex; flex-direction: column; flex: none; width: 129px; border: 1px solid #a2a2ae; box-shadow: inset 0 0 0 1px #fff; padding: 2px 3px; }
    .nav-head { display: flex; align-items: center; height: 18px; padding: 0 4px 0 2px; font-weight: 700; color: #a2a2ae; background: linear-gradient(#eaebee, #dfe0e4); flex: none; }
    .nav-head .icon { margin-left: auto; }
    .nav-head button { margin-left: 13px; color: #747482; display: flex; }
    .nav-title { height: 33px; margin: 0; padding: 11px 7px; font-size: 11px; font-weight: 400; background: linear-gradient(100deg, #ebecf0 30%, #f5f6f8 60%, #ebecf0); border-bottom: 1px solid #c6c7d0; flex: none; }
    .nav-list { list-style: none; margin: 0; padding: 0; }
    .nav-list.top { flex: 1; min-height: 0; }
    .nav-list li { display: flex; flex-direction: column; justify-content: center; height: 30px; }
    .nav-list a { display: flex; align-items: center; gap: 5px; height: 30px; padding-left: 7px; white-space: nowrap; }
    .nav-list.groups a { padding-left: 8px; height: 28px; border: 1px solid transparent; border-radius: 2px; }
    .nav-list.groups a.current { border-color: #a8a8b4; background: #d5d6dc; box-shadow: inset 0 1px 3px #b6b6c2; }
    .nav-list .first { background: linear-gradient(90deg, #ebecf0, #f6f7f9 50%, #ebecf0); border-bottom: 1px solid #dcdde3; }
    .nav-list.groups { border-top: 1px solid #c3c4ce; border-bottom: 1px solid #c3c4ce; padding: 3px 0; }
    .nav-foot { display: flex; align-items: center; gap: 12px; height: 30px; padding-left: 16px; flex: none; }
    .nav-foot .arrow { margin-left: 4px; }

    .doc { display: flex; flex-direction: column; flex: 1; min-width: 0; }
    .sheet-tab { display: flex; align-items: center; gap: 3px; width: max-content; height: 26px; margin-bottom: -1px; padding: 0 10px; border: 1px solid #9d9dab; border-bottom: 0; background: #fff; z-index: 1; white-space: nowrap; flex: none; }
    .sheet { display: flex; flex-direction: column; flex: 1; min-height: 0; border: 1px solid #9d9dab; background: #fff; box-shadow: 1px 1px 2px #c6c6ce; }
    .tab-line { display: flex; align-items: flex-end; justify-content: space-between; padding: 0 11px 0 3px; height: 25px; flex: none; }
    .tab-line > .arrow { margin-bottom: 11px; }
    .doc-tab { gap: 4px; color: #77778a; background: #ebecf0; }
    .doc-sheet { background: #ebecf0; padding: 10px 9px 4px 5px; box-shadow: none; }
    .fieldset { flex: none; border: 1px solid #c0c1cb; border-radius: 3px; }
    .fieldset header { display: flex; align-items: center; gap: 6px; border-radius: 3px 3px 0 0; background: linear-gradient(#e8e9ec, #dfe0e4); }
    .event-box { height: 88px; margin: 0 1px 0 5px; }
    .event-box header { height: 24px; padding-left: 12px; }
    .event-fields { display: flex; align-items: flex-start; gap: 6px; padding: 10px 10px 0 9px; }
    .event-fields label { line-height: 20px; }
    .event-fields input { height: 20px; width: 120px; background: #f4f4f6; border: 1px solid #a8a8b4; border-right-color: #dadae0; border-bottom-color: #dadae0; }
    .flags { margin-left: auto; display: flex; flex-direction: column; gap: 2px; width: 160px; }
    .flag { height: 20px; background: #e1ff80; border: 1px solid #dadae0; border-top-color: #9a9aa8; }
    .flag.go { background: #32cd32; }
    .tab-a { margin-left: 3px; margin-top: 6px; padding-left: 9px; }
    .sheet-a { padding: 5px; padding-right: 9px; }
    .tab-b { margin-left: 3px; padding-left: 9px; }
    .sheet-b { padding: 2px; }
    .pane { display: flex; flex-direction: column; flex: 1; min-height: 0; border: 1px solid #c8c9d2; background: #ebecf0; padding: 0 1px; border-radius: 2px; }
    .bar { display: flex; align-items: center; height: 30px; flex: none; margin: -1px 0 3px; padding: 0 2px 0 4px; gap: 8px; background: linear-gradient(#fff, #f0f1f5); border: 1px solid #dadbe2; border-bottom: 1px solid #b6b7c2; border-radius: 3px; }
    .bar button { display: flex; }
    .bar input { margin-left: auto; width: 180px; height: 20px; padding: 0 5px; text-align: right; background: #fff; border: 1px solid #a3a3b0; border-right-color: #cfd0d8; border-bottom-color: #cfd0d8; }
    .bar input::placeholder { color: #1e1e32; opacity: 1; }

    table { border-collapse: separate; border-spacing: 0; table-layout: fixed; width: 100%; }
    th, td { padding: 0 4px 0 3px; text-align: left; font-weight: 400; white-space: nowrap; overflow: hidden; border-right: 1px solid #cfd0da; border-bottom: 1px solid #cfd0da; }
    th { background: linear-gradient(#f9f9fb, #eeeff2); }
    td { height: 21px; background: #f1f5fa; }
    tr:nth-child(odd) td { background: #f6f3fe; }
    th:last-child, td:last-child { border-right: 0; }
    tbody td.mark, tbody tr:nth-child(odd) td.mark { background: #f2f3f6; padding: 0 5px; }
    td.num { text-align: right; }
    .grid { border: 1px solid #9090a0; background: #fff; overflow: hidden; }
    .status-grid { flex: none; }
    .status-grid th { height: 32px; }
    .status-grid tbody tr td.status { background: #e1ff80; color: #111; }
    .status-grid tbody tr.focus td.num { background: #eeefef; }
    .mark-col { width: 16px; }
    .status-col { width: 165px; }
    .amount-col { width: 110px; }
    .totals { display: flex; height: 31px; margin-top: 4px; padding: 3px; padding-left: 17px; border-top: 1px solid #b6b7c2; background: linear-gradient(#e2e3e7, #eaebee); }
    .totals div { flex: 1; padding: 5px 4px; line-height: 13px; text-align: right; background: #fff; border: 1px solid #c0c1cb; }
    .inner { display: flex; flex-direction: column; flex: 1; min-height: 0; margin: 9px 9px 4px 5px; }
    .tab-c { margin-left: 3px; padding-left: 9px; }
    .sheet-c { padding: 2px; }
    .plan { display: flex; flex-direction: column; flex: 1; min-height: 0; margin-bottom: 2px; }
    .plan th { height: 19px; }
    .plan .foot { height: 30px; margin-top: auto; border-top: 1px solid #c0c1cb; background: linear-gradient(#e2e3e7, #eaebee); }
    .sort { float: right; margin: 4px 11px 0 0; }

    .statusbar { display: flex; align-items: center; gap: 10px; height: 29px; flex: none; margin: 0 4px 3px; padding-left: 7px; border-top: 1px solid #a2a2b0; border-bottom: 1px solid #a2a2b0; background: linear-gradient(#d9dadf, #c6c7ce); }
    .statusbar .icon { margin: auto 1px 1px auto; }

    .dialog { position: absolute; z-index: 5; left: 226px; top: 98px; right: 90px; bottom: 31px; display: flex; flex-direction: column; border: 1px solid #9596a3; background: linear-gradient(#dfe0e5, #c6c7cf 25px); color: #1e1e32; }
    .dialog-title { display: flex; align-items: center; gap: 3px; height: 25px; padding-left: 7px; flex: none; }
    .dialog-title h2 { margin: 0; font-size: 11px; color: #5a5a6c; flex: 1; }
    .client { display: flex; flex-direction: column; flex: 1; min-height: 0; margin: 0 3px 3px; padding: 12px 0 0; border: 1px solid #a2a3b0; background: #ebecf0; }
    .intro { margin: 0 12px 6px; }
    .intro header { height: 18px; padding-left: 11px; border-bottom: 1px solid #f4f4f6; }
    .intro p { margin: 0; padding: 11px 9px 9px; }
    .tabs { display: flex; align-items: flex-end; height: 25px; margin: 0 11px 0 7px; padding-left: 4px; flex: none; }
    .tabs button { display: flex; align-items: center; height: 23px; gap: 2px; padding: 0 8px; white-space: nowrap; color: #4a4a5c; border: 1px solid #9d9dab; border-bottom: 0; border-left-width: 0; background: linear-gradient(#e7e8eb, #d8d9de); box-shadow: inset 1px 1px #f3f3f6; }
    .tabs button:first-child { border-left-width: 1px; }
    .tabs button.selected { height: 26px; margin: 0 0 -1px -1px; padding: 0 10px 1px; gap: 3px; z-index: 1; color: #1e1e32; background: #fff; border-left-width: 1px; }
    .page { display: flex; flex: 1; min-height: 0; margin: 0 11px 0 7px; padding: 2px; border: 1px solid #9d9dab; background: #fff; box-shadow: 1px 1px 2px #c6c6ce; }
    .page-in { display: flex; flex: 1; min-width: 0; padding: 1px; border: 1px solid #c0c1cb; }
    .page .grid { flex: 1; min-width: 0; overflow: auto; }
    .page th { height: 19px; }
    .code-col { width: 165px; }
    .text-col { width: 305px; }
    .charge-col { width: 109px; }
    .qty-col { width: 210px; }
    .page tbody tr.hot td:not(.mark) { background: #800000; color: #fff; }
    .page tbody tr.edit td:not(.mark) { background: #e0e9fc; border-top: 1px dotted #1e1e32; border-bottom: 1px dotted #1e1e32; }
    .page tbody tr.edit td.cell-edit { background: #fff; padding: 0; }
    .spin { position: relative; display: flex; align-items: center; }
    .spin input { flex: 1; min-width: 0; text-align: right; height: 17px; padding-right: 1px; }
    .caret { position: absolute; right: 23px; top: 2px; width: 1px; height: 13px; background: #000; }
    .steps { display: flex; flex-direction: column; gap: 4px; padding: 0 5px 0 8px; }
    .steps button { display: flex; }
    .actions { display: flex; justify-content: flex-end; gap: 6px; margin-top: 6px; padding: 13px 13px 12px; border-top: 1px solid #cbccd4; box-shadow: inset 0 1px #fff; flex: none; }
    .actions button { width: 75px; height: 22px; border: 1px solid #9d9dab; border-radius: 2px; background: linear-gradient(#f2f2f5, #dcdde2 60%, #e9e9ed); box-shadow: inset 0 0 0 1px #f3f3f6; }
    .actions .primary { background: linear-gradient(#f5f8fe, #cfdefc 50%, #e6eefe); }
    .grip { position: absolute; right: 5px; bottom: 5px; }
  `;

  private defs() {
    return html`<svg class="defs" width="0" height="0" aria-hidden="true"><defs>
      <linearGradient id="g-red" x2="0" y2="1"><stop offset="0" stop-color="#ef6a55" /><stop offset=".5" stop-color="#d6261e" /><stop offset="1" stop-color="#b81a14" /></linearGradient>
      <linearGradient id="g-page" x2="1" y2="1"><stop offset="0" stop-color="#fff" /><stop offset="1" stop-color="#c9e0f8" /></linearGradient>
      <linearGradient id="g-cube" x2="0" y2="1"><stop offset="0" stop-color="#5fa9ea" /><stop offset="1" stop-color="#1f66ba" /></linearGradient>
      <linearGradient id="g-info" x2="0" y2="1"><stop offset="0" stop-color="#6cb9e6" /><stop offset="1" stop-color="#1565ac" /></linearGradient>
      <linearGradient id="g-note" x2="0" y2="1"><stop offset="0" stop-color="#f7b545" /><stop offset="1" stop-color="#fde0a0" /></linearGradient>
      <linearGradient id="g-tri" x2="1" y2="1"><stop offset="0" stop-color="#d3e6fa" /><stop offset="1" stop-color="#5c9ade" /></linearGradient>
      <linearGradient id="g-lime" x2="0" y2="1"><stop offset="0" stop-color="#b5e33c" /><stop offset="1" stop-color="#4fae1c" /></linearGradient>
      <radialGradient id="g-orb" cy=".3"><stop offset="0" stop-color="#fff" /><stop offset="1" stop-color="#cdbfdc" /></radialGradient>
    </defs></svg>`;
  }

  private frameButtons() {
    return html`<div class="frame-buttons">
      <button aria-label="Minimize"><svg width="11" height="9"><path d="M1 7 H10" stroke="currentColor" stroke-width="2" /></svg></button>
      <button aria-label="Maximize"><svg width="9" height="7"><path d="M1 1 H8 V6 H1 Z" fill="none" stroke="currentColor" stroke-width="2" /></svg></button>
      <button aria-label="Close"><svg width="9" height="8"><path d="M1 .5 L8 7.500 M8 .5 L1 7.500" stroke="currentColor" stroke-width="2.200" /></svg></button>
    </div>`;
  }

  private grip() {
    return html`<svg class="icon" width="11" height="11" aria-hidden="true"><path d="M0 11 L11 0 M4 11 L11 4 M8 11 L11 8" stroke="#8e8e9c" /></svg>`;
  }

  private tool(t: Tool) {
    return html`<button class="tool" style=${styleMap({ width: `${t.width}px` })} ?disabled=${t.disabled}>
      ${icon(t.icon, 32)}<span>${t.label}</span>${t.menu ? html`<i class="arrow large"></i>` : nothing}
    </button>`;
  }

  private group(caption: string, tools: Tool[], extra: TemplateResult | typeof nothing = nothing) {
    return html`<section class="group"><div class="tools">${tools.map((t) => this.tool(t))}${extra}</div><div class="caption">${caption}</div></section>`;
  }

  private header() {
    return html`
      <div class="title-row">
        <div class="quick">
          <button aria-label="Edit">${icon("edit", 16)}</button>
          <button aria-label="Template">${icon("copyTemplate", 16)}</button>
          <button aria-label="Information">${icon("info", 16)}</button>
          <button aria-label="More"><i class="arrow large"></i></button>
          <button aria-label="Itinerary">${icon("itinerary", 16)}</button>
          <button aria-label="Refresh">${icon("refresh", 16)}</button>
          <button class="lead" aria-label="Find">${icon("binoculars", 16)}</button>
          <button class="lead" aria-label="Customize"><svg class="icon" width="22" height="6"><path d="M11 .5 H18" stroke="#1e1e32" /><path d="M11 2 H18 L14.500 6 Z" fill="#1e1e32" /></svg></button>
        </div>
        <h1 class="title">147: Continuing Education Conference - Event - EventPro</h1>
        ${this.frameButtons()}
      </div>
      <div class="tab-row" role="tablist">
        <button class="ribbon-tab active" role="tab">Home</button>
        <button class="ribbon-tab" role="tab">View</button>
        <button class="ribbon-tab" role="tab">Tools</button>
        <button class="collapse" aria-label="Collapse ribbon"><svg width="13" height="9"><path d="M1.500 5 L6.500 1 L11.500 5 M1.500 8 L6.500 4 L11.500 8" fill="none" stroke="#7b7b8a" stroke-width="1.200" /></svg></button>
      </div>
      <button class="app-orb" aria-label="Application menu"><svg width="38" height="38" viewBox="0 0 38 38">
        <circle cx="19" cy="19" r="18.200" fill="url(#g-orb)" stroke="#8d8899" stroke-width="1.300" />
        <path d="M23 8 Q8 8 5 19 Q4 26 13 30 Q10 24 12 18 Q15 11 23 8 Z" fill="#2f9e3a" />
        <path d="M5 20 Q6 31 18 30.500 Q27 30 31 23 Q22 28 14 26 Q8 25 5 20 Z" fill="#8bc53f" />
        <path d="M16 14 Q24 9 31 15 Q36 20 29 24.500 Q23 27.500 17 26 Q26 24 26 19 Q24 14 16 14 Z" fill="#1c5fb0" /></svg></button>`;
  }

  private ribbon() {
    const gap = html`<span class="gap"></span>`;
    return html`<div class="ribbon">
      ${this.group("Close", [{ label: "Close", icon: "close", width: 43 }], gap)}
      ${this.group("Objects Creation", [{ label: "New", icon: "blank", width: 95, menu: true }], gap)}
      ${this.group("Edit", EVENT_TOOLS, gap)}
      ${this.group("Open Related", [{ label: "Open Related", icon: "related", width: 83, disabled: true }])}
      ${this.group("View", [
        { label: "Itinerary", icon: "itinerary", width: 58 }, { label: "Refresh", icon: "refresh", width: 50 }, { label: "Audit", icon: "audit", width: 48 },
      ])}
      ${this.group("Records Navigation", [
        { label: "Find Event", icon: "binoculars", width: 66 }, { label: "First Event", icon: "first", width: 42 },
      ], html`<div class="small-tools"><button>${icon("previous", 14)}Previous Event</button><button>${icon("next", 14)}Next Event</button></div>`)}
      ${this.group("Reports", [{ label: "Reports", icon: "clipboard", width: 56 }])}
    </div>`;
  }

  private navigation() {
    return html`<nav class="nav">
      <div class="nav-head">Navigation ${icon("pushpin", 12)}<button aria-label="Close panel"><svg width="10" height="8"><path d="M1 0 L9 8 M9 0 L1 8" stroke="currentColor" stroke-width="1.800" /></svg></button></div>
      <h2 class="nav-title">Events</h2>
      <ul class="nav-list top">${NAV_ITEMS.map(([i, t], n) => html`<li><a href="#" class=${classMap({ first: n === 0 })}>${icon(i, 16)}${t}</a></li>`)}</ul>
      <ul class="nav-list groups">${NAV_GROUPS.map(([i, t]) => html`<li><a href="#" class=${classMap({ current: t === "Events" })}>${icon(i, 16)}${t}</a></li>`)}</ul>
      <div class="nav-foot">${icon("orb", 16)}${icon("sigmaChart", 16)}${icon("areaChart", 16)}<i class="arrow large muted"></i></div>
    </nav>`;
  }

  private toolbar(cubes: string, label: string) {
    return html`<div class="bar">
      <button aria-label="New">${icon("smallDoc", 16)}</button><i class="arrow"></i>
      <button aria-label="Link">${icon(cubes, 16)}</button><i class="arrow"></i>
      <input type="text" aria-label=${label} placeholder="Search" />
    </div>`;
  }

  private doc() {
    return html`<main class="doc">
      <div class="tab-line"><div class="sheet-tab doc-tab">${icon("pin", 16)}147: Continuing Education Conference</div><i class="arrow large muted"></i></div>
      <div class="sheet doc-sheet">
        <section class="fieldset event-box">
          <header>${icon("pin", 14)}Event</header>
          <div class="event-fields"><label for="book">Book #:</label><input id="book" type="text" readonly />
            <div class="flags"><div class="flag"></div><div class="flag go"></div></div></div>
        </section>
        <div class="sheet-tab tab-a">${icon("layout", 16)}Event Details</div>
        <div class="sheet sheet-a">
          <div class="sheet-tab tab-b">${icon("building", 16)}Booked Locations</div>
          <div class="sheet sheet-b"><div class="pane">
            ${this.toolbar("greenCubes", "Search locations")}
            <div class="grid status-grid">
              <table>
                <colgroup><col class="mark-col" /><col class="status-col" /><col /><col class="amount-col" /></colgroup>
                <thead><tr><th></th><th>Status</th><th></th><th></th></tr></thead>
                <tbody>${AMOUNTS.map((a, n) => html`<tr class=${classMap({ focus: n === 7 })}>
                  <td class="mark">${n === 7 ? html`<svg class="icon" width="5" height="7"><path d="M0 0 L4 3.500 L0 7 Z" fill="#1e1e32" /></svg>` : nothing}</td>
                  <td class="status">Contract Signed</td><td></td><td class="num">${a}</td></tr>`)}</tbody>
              </table>
              <div class="totals"><div>$9,800.00</div></div>
            </div>
            <div class="inner">
              <div class="sheet-tab tab-c">${icon("bullets", 16)}Itinerary</div>
              <div class="sheet sheet-c"><div class="pane">
                ${this.toolbar("grayCubes", "Search itinerary")}
                <div class="grid plan">
                  <table><colgroup><col class="mark-col" /><col /></colgroup><thead><tr><th></th><th>Itinerary<i class="arrow large up sort"></i></th></tr></thead></table>
                  <div class="foot"></div>
                </div>
              </div></div>
            </div>
          </div></div>
        </div>
      </div>
    </main>`;
  }

  private configRow(c: Config, n: number) {
    const edit = n === this.editing;
    return html`<tr class=${classMap({ hot: n === this.highlighted, edit })}>
      <td class="mark">${edit ? html`<svg class="icon" width="6" height="9"><path d="M0 .5 H6 M0 8.500 H6 M3 0 V9" stroke="#1e1e32" /></svg>` : nothing}</td>
      <td>${c.code}</td><td>${c.text}</td><td>${c.charge}</td><td class="num">0.00</td>
      ${edit
        ? html`<td class="cell-edit"><div class="spin"><input type="text" aria-label="Count" .value=${c.count} /><i class="caret"></i>
            <div class="steps"><button aria-label="Increase"><i class="arrow large up"></i></button><button aria-label="Decrease"><i class="arrow large"></i></button></div></div></td>`
        : html`<td class="num">${c.count}</td>`}
    </tr>`;
  }

  private dialog() {
    return html`<div class="dialog" role="dialog" aria-labelledby="dialog-title">
      <div class="dialog-title">${icon("bookAdd", 16)}<h2 id="dialog-title">Add Resources</h2>${this.frameButtons()}</div>
      <div class="client">
        <section class="fieldset intro"><header>Add Resources</header><p>Enter the quantity required of each item to add to the selected locations.</p></section>
        <div class="tabs" role="tablist">
          <button role="tab">${icon("tableIcon", 16)}Setup Items</button>
          <button role="tab">${icon("person", 16)}Staffing Items</button>
          <button role="tab">${icon("glasses", 16)}Beverage Configs</button>
          <button role="tab" class="selected" aria-selected="true">${icon("cloche", 14)}Catering Configs</button>
          <button role="tab">${icon("box", 16)}Packages</button>
        </div>
        <div class="page"><div class="page-in"><div class="grid"><table>
          <colgroup><col class="mark-col" /><col class="code-col" /><col class="text-col" /><col class="charge-col" /><col class="qty-col" /><col /></colgroup>
          <thead><tr><th></th><th>Item Code<i class="arrow large up sort"></i></th><th>Description</th><th>Charge Calculation</th><th>Quantity</th><th>Count</th></tr></thead>
          <tbody>${CONFIGS.map((c, n) => this.configRow(c, n))}</tbody>
        </table></div></div></div>
        <div class="actions"><button class="primary">OK</button><button>Cancel</button></div>
      </div>
      <div class="grip">${this.grip()}</div>
    </div>`;
  }

  render() {
    return html`<div class="window">
      ${this.defs()}${this.header()}${this.ribbon()}
      <div class="body">${this.navigation()}${this.doc()}</div>
      <footer class="statusbar"><span>Client ID: PSI001000AK</span><span>Memory Usage: 237MB</span><span>Total Users: 1</span><span>Total Concurrent: 0</span><span>User: aliciag_001000</span>${this.grip()}</footer>
      ${this.dialog()}
    </div>`;
  }
}
